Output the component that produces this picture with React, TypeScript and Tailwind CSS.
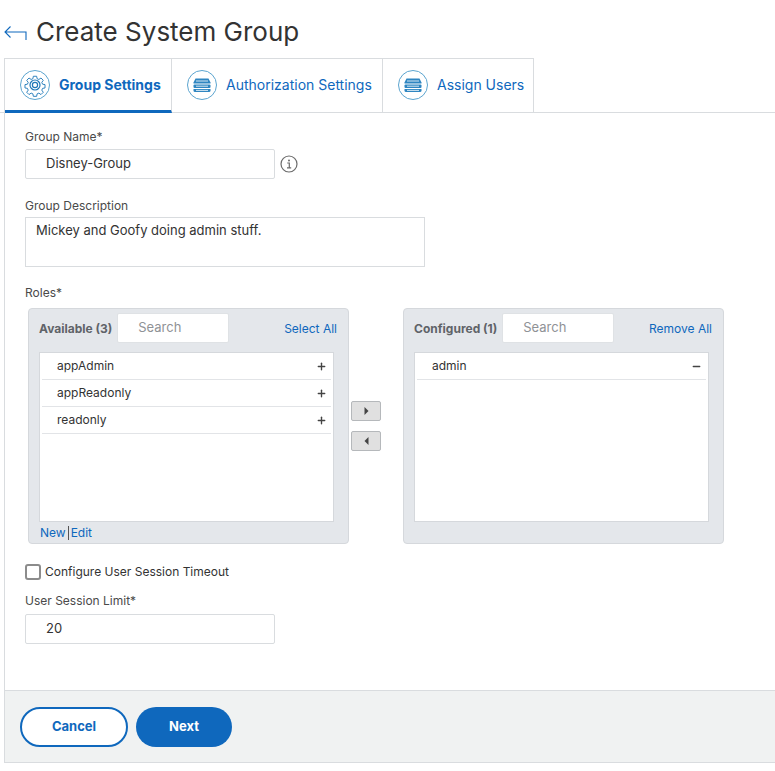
import type { ReactNode } from "react";
import { Plus, Minus } from "lucide-react";

const GearIcon = () => (
  <svg width="30" height="30" viewBox="0 0 30 30" fill="none">
    <circle cx="15" cy="15" r="14.5" stroke="#5ba4cf" />
    <path
      d="M13.2 5.5h3.6l.5 2.7 1.9.8 2.3-1.6 2.5 2.5-1.6 2.3.8 1.9 2.7.5v3.6l-2.7.5-.8 1.9 1.6 2.3-2.5 2.5-2.3-1.6-1.9.8-.5 2.7h-3.6l-.5-2.7-1.9-.8-2.3 1.6-2.5-2.5 1.6-2.3-.8-1.9-2.7-.5v-3.6l2.7-.5.8-1.9-1.6-2.3 2.5-2.5 2.3 1.6 1.9-.8z"
      stroke="#1f78b8"
      strokeWidth="1"
      strokeLinejoin="round"
      transform="translate(1.2 1.2) scale(.92)"
    />
    <circle cx="15" cy="15" r="5" stroke="#1f78b8" strokeWidth="1.2" />
    <circle cx="15" cy="15" r="2.6" stroke="#1f78b8" strokeWidth="1.2" />
  </svg>
);

const StackIcon = () => (
  <svg width="30" height="30" viewBox="0 0 30 30" fill="none">
    <circle cx="15" cy="15" r="14.5" stroke="#5ba4cf" />
    <path d="M8.5 8.5h13l2 4v1h-17v-1z" fill="#2f86c1" />
    <rect x="6.5" y="14.5" width="17" height="3.4" rx="1" fill="#2f86c1" />
    <path d="M6.5 19h17v1.5a1.5 1.5 0 0 1-1.5 1.5H8a1.5 1.5 0 0 1-1.5-1.5z" fill="#2f86c1" />
    <path d="M9 11h12M9 16.2h12M9 20.4h12" stroke="#ffffff" strokeWidth=".8" />
  </svg>
);

const tabs = [
  { label: "Group Settings", icon: <GearIcon />, width: "w-[167px]", active: true },
  { label: "Authorization Settings", icon: <StackIcon />, width: "w-[211px]", active: false },
  { label: "Assign Users", icon: <StackIcon />, width: "w-[151px]", active: false },
];

const Label = ({ children }: { children: ReactNode }) => (
  <div className="text-[12px] leading-[16px] text-[#4a4a4a]">{children}</div>
);

const TextInput = ({ value }: { value: string }) => (
  <div className="flex h-[30px] w-[250px] items-center rounded-[2px] border border-[#d9dcdf] pl-[20px] text-[13px] text-[#333333]">
    {value}
  </div>
);

const Panel = ({
  title,
  action,
  items,
  icon,
  searchGap,
  footer,
}: {
  title: string;
  action: string;
  items: string[];
  icon: ReactNode;
  searchGap: string;
  footer?: boolean;
}) => (
  <div className="flex h-[236px] w-[321px] flex-col rounded-[4px] border border-[#d5d8dc] bg-[#e4e7eb] px-[10px]">
    <div className="flex h-[43px] shrink-0 items-start pt-[4px]">
      <span className="mt-[8px] text-[12px] leading-[16px] font-bold whitespace-nowrap text-[#5f6368]">{title}</span>
      <div className={`${searchGap} flex h-[30px] w-[112px] shrink-0 items-center rounded-[2px] border border-[#dfe2e5] bg-white pl-[20px] text-[13px] text-[#8f9296]`}>
        Search
      </div>
      <a className="mt-[8px] ml-auto pr-[1px] text-[12px] leading-[16px] whitespace-nowrap text-[#0f68bd]">{action}</a>
    </div>
    <div className="h-[170px] w-[295px] shrink-0 border border-[#d5d8dc] bg-white px-[2px]">
      {items.map((item) => (
        <div key={item} className="flex h-[27px] items-center justify-between border-b border-[#e2e4e7] pr-[4px] pl-[15px] text-[12px] text-[#333333]">
          {item}
          {icon}
        </div>
      ))}
    </div>
    {footer && (
      <div className="flex h-[21px] items-center pl-[1px] text-[12px] text-[#0f68bd]">
        <a>New</a>
        <span className="mx-[2px] h-[14px] w-px bg-[#555555]" />
        <a>Edit</a>
      </div>
    )}
  </div>
);

const ArrowButton = ({ dir }: { dir: "left" | "right" }) => (
  <button className="flex h-[20px] w-[30px] items-center justify-center rounded-[2px] border border-[#b5b8bb] bg-[#e0e0e0]">
    <svg width="5" height="8" viewBox="0 0 5 8">
      <path d={dir === "right" ? "M.5 0 4.5 4 .5 8z" : "M4.5 0 .5 4 4.5 8z"} fill="#444444" />
    </svg>
  </button>
);

export default function App() {
  return (
    <div className="h-[771px] w-[775px] overflow-hidden bg-white font-['Inter',sans-serif]">
      <div className="flex h-[58px] items-start pt-[15px] pl-[4px]">
        <svg width="23" height="16" viewBox="0 0 23 16" fill="none" className="mt-[10px]">
          <path d="M22 15V7H1M6.5 1.5 1 7l5.5 5.5" stroke="#0f68bd" strokeWidth="1.1" />
        </svg>
        <h1 className="ml-[9px] text-[26px] leading-[34px] font-normal text-[#333333]">Create System Group</h1>
      </div>

      <div className="flex h-[55px] border-b border-[#d9dcdf] pl-[4px]">
        <div className="flex h-[54px] border-t border-l border-[#d9dcdf]">
          {tabs.map((tab) => (
            <div
              key={tab.label}
              className={`${tab.width} flex items-center gap-[9px] border-r border-[#d9dcdf] pl-[15px] text-[14px] whitespace-nowrap text-[#0f68bd] ${
                tab.active ? "-mb-px border-b-[3px] border-b-[#0f68bd] font-bold" : "pb-[2px]"
              }`}
            >
              {tab.icon}
              {tab.label}
            </div>
          ))}
        </div>
      </div>

      <div className="ml-[4px] h-[577px] border-l border-[#d9dcdf] pt-[16px] pl-[20px]">
        <Label>Group Name*</Label>
        <div className="mt-[4px] flex items-center gap-[5px]">
          <TextInput value="Disney-Group" />
          <svg width="18" height="18" viewBox="0 0 18 18" fill="none">
            <circle cx="9" cy="9" r="8" stroke="#6b6b6b" strokeWidth="1.2" />
            <path d="M7.2 8h2.1v4.6M7 12.8h4.2" stroke="#6b6b6b" strokeWidth="1.2" />
            <circle cx="9" cy="5.4" r="1" fill="#6b6b6b" />
          </svg>
        </div>

        <div className="mt-[19px]">
          <Label>Group Description</Label>
        </div>
        <div className="mt-[3px] h-[50px] w-[400px] border border-[#d9dcdf] pt-[3px] pl-[10px] text-[13px] leading-[18px] text-[#333333]">
          Mickey and Goofy doing admin stuff.
        </div>

        <div className="mt-[18px]">
          <Label>Roles*</Label>
        </div>
        <div className="mt-[7px] ml-[3px] flex">
          <Panel
            title="Available (3)"
            action="Select All"
            searchGap="ml-[5px]"
            items={["appAdmin", "appReadonly", "readonly"]}
            icon={<Plus size={11} strokeWidth={3} color="#444444" />}
            footer
          />
          <div className="ml-[2px] flex w-[30px] flex-col gap-[10px] pt-[93px]">
            <ArrowButton dir="right" />
            <ArrowButton dir="left" />
          </div>
          <div className="ml-[22px]">
            <Panel
              title="Configured (1)"
              action="Remove All"
              searchGap="ml-[5px]"
              items={["admin"]}
              icon={<Minus size={11} strokeWidth={3} color="#444444" />}
            />
          </div>
        </div>

        <label className="mt-[20px] flex h-[16px] items-center gap-[4px] text-[12px] text-[#333333]">
          <span className="h-[16px] w-[16px] rounded-[3px] border-2 border-[#8c8c8c] bg-white" />
          Configure User Session Timeout
        </label>
        <div className="mt-[13px]">
          <Label>User Session Limit*</Label>
        </div>
        <div className="mt-[5px]">
          <TextInput value="20" />
        </div>
      </div>

      <div className="ml-[4px] flex h-[73px] items-center gap-[8px] border border-r-0 border-[#d9dcdf] bg-[#f0f2f2] pl-[15px]">
        <button className="h-[40px] w-[108px] rounded-full border-2 border-[#0f68bd] bg-white text-[13px] font-bold text-[#0f68bd]">
          Cancel
        </button>
        <button className="h-[40px] w-[96px] rounded-full bg-[#0f68bd] text-[13px] font-bold text-white">Next</button>
      </div>
    </div>
  );
}
